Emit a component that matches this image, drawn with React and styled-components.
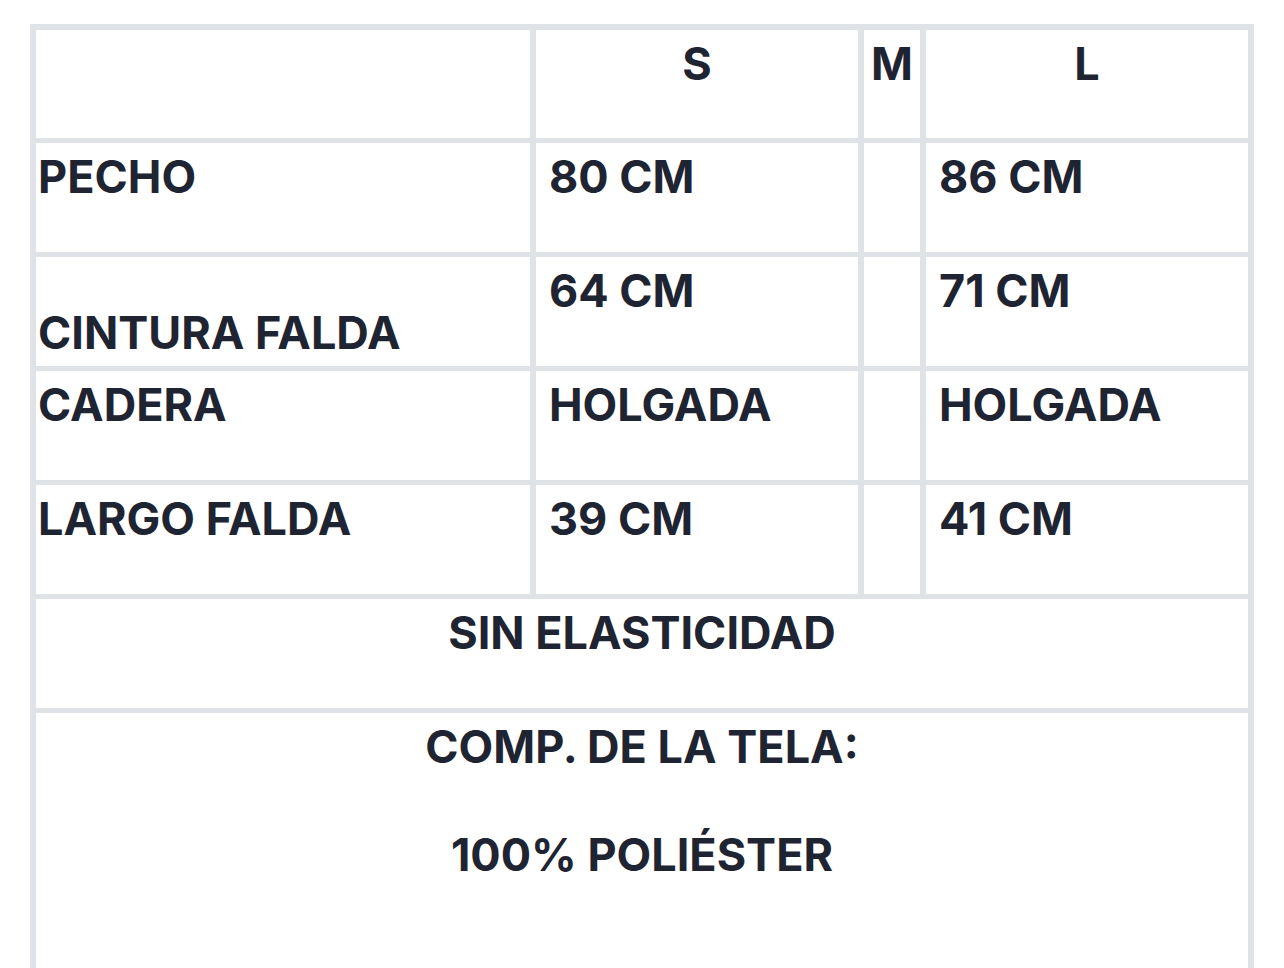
import { Fragment } from 'react';
import styled, { createGlobalStyle } from 'styled-components';

const GlobalStyle = createGlobalStyle`
  body {
    margin: 0;
    background: #ffffff;
    font-family: Inter, "Noto Sans", "Liberation Sans", sans-serif;
  }
`;

const Page = styled.div`
  padding: 24px 30px 0;
  height: 944px;
  overflow: hidden;
`;

const Table = styled.div`
  display: grid;
  grid-template-columns: 494px 322px 56px 322px;
  grid-template-rows: 108px repeat(5, 109px) 320px;
  column-gap: 6px;
  row-gap: 5px;
  padding: 6px;
  background: #dfe2e7;
`;

const Cell = styled.div`
  background: #ffffff;
  color: #1f2433;
  font-weight: 700;
  font-size: 45px;
  line-height: 1;
  padding: ${(p) => p.$top ?? 11}px ${(p) => (p.$first ? 0 : 13)}px 0
    ${(p) => (p.$first ? 2 : 13)}px;
  text-align: ${(p) => (p.$center ? 'center' : 'left')};
  grid-column: ${(p) => (p.$span ? '1 / -1' : 'auto')};
  white-space: nowrap;
`;

const HeadCell = styled(Cell)`
  text-align: center;
  padding-left: 0;
  padding-right: 0;
`;

const Line = styled.p`
  margin: 0 0 ${(p) => p.$gap ?? 0}px;
`;

const rows = [
  { label: 'PECHO', s: '80 CM', l: '86 CM' },
  { label: 'CINTURA FALDA', s: '64 CM', l: '71 CM', labelTop: 53 },
  { label: 'CADERA', s: 'HOLGADA', l: 'HOLGADA' },
  { label: 'LARGO FALDA', s: '39 CM', l: '41 CM' },
];

const App = () => {
  return (
    <Page>
      <GlobalStyle />
      <Table>
        <HeadCell $first></HeadCell>
        <HeadCell>S</HeadCell>
        <HeadCell>M</HeadCell>
        <HeadCell>L</HeadCell>
        {rows.map((row) => (
          <Fragment key={row.label}>
            <Cell $first $top={row.labelTop}>
              {row.label}
            </Cell>
            <Cell>{row.s}</Cell>
            <Cell></Cell>
            <Cell>{row.l}</Cell>
          </Fragment>
        ))}
        <Cell $span $center>
          SIN ELASTICIDAD
        </Cell>
        <Cell $span $center>
          <Line $gap={63}>COMP. DE LA TELA:</Line>
          <Line>100% POLIÉSTER</Line>
        </Cell>
      </Table>
    </Page>
  );
};

export default App;
